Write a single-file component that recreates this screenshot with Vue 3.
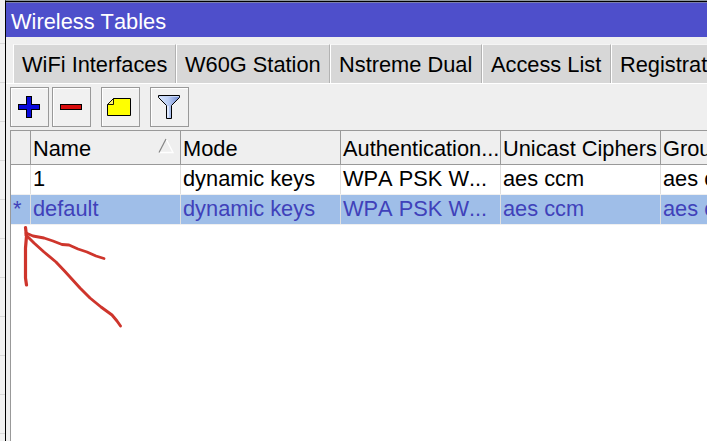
<template>
    <div class="desktop">
        <div class="backdrop"></div>
        <div class="window">
            <div class="title-bar">Wireless Tables</div>
            <div class="tabs">
                <div v-for="tab in tabs" :key="tab.label" :class="['tab', tab.size]">{{ tab.label }}</div>
            </div>
            <div class="toolbar">
                <button class="tool" title="Add">
                    <svg width="37" height="38" viewBox="0 0 37 38" shape-rendering="crispEdges">
                        <path d="M15.5 8.500h5v8h8v5h-8v8h-5v-8h-8v-5h8z" fill="#0909dc" stroke="#000" />
                    </svg>
                </button>
                <button class="tool" title="Remove">
                    <svg width="37" height="38" viewBox="0 0 37 38" shape-rendering="crispEdges">
                        <path d="M7.500 16.500h21v5h-21z" fill="#d80d0d" stroke="#000" />
                    </svg>
                </button>
                <button class="tool comment" title="Comment">
                    <svg width="37" height="38" viewBox="0 0 37 38">
                        <path d="M11.500 10.500H28.500V27.500H5.500V16.500z" fill="#ffff00" stroke="#000" />
                        <path d="M5.500 16.500L11.500 10.500V16.500z" fill="#fff36b" stroke="#000" stroke-width=".9" />
                    </svg>
                </button>
                <button class="tool filter" title="Filter">
                    <svg width="37" height="38" viewBox="0 0 37 38">
                        <defs>
                            <linearGradient id="steel" x1="0" x2="1">
                                <stop offset="0" stop-color="#dce8fb" />
                                <stop offset=".45" stop-color="#bdd0f6" />
                                <stop offset="1" stop-color="#7189cf" />
                            </linearGradient>
                        </defs>
                        <path d="M7.500 7.500H28.500V9.500L20.500 17.500V30.500H15.500V17.500L7.500 9.500z" fill="url(#steel)" stroke="#000" />
                        <path d="M8 8.500H28" stroke="#c5d5f5" />
                        <path d="M17 18V29.500" stroke="#dfe9fb" stroke-width="2" />
                    </svg>
                </button>
            </div>
            <div class="grid">
                <div class="row header">
                    <div class="cell flag"></div>
                    <div v-for="col in columns" :key="col.key" :class="['cell', col.key]">
                        <span>{{ col.label }}</span>
                        <svg v-if="col.key === 'name'" class="sort" width="17" height="16" viewBox="0 0 17 16">
                            <path d="M8 1L15 14.500H1" fill="none" stroke="#fff" stroke-width="1.400" />
                            <path d="M1 14.500L8 1" stroke="#858585" stroke-width="1.200" />
                        </svg>
                    </div>
                </div>
                <div v-for="profile in profiles" :key="profile.name" :class="['row', { selected: profile.isDefault }]">
                    <div class="cell flag">{{ profile.isDefault ? '*' : '' }}</div>
                    <div v-for="col in columns" :key="col.key" :class="['cell', col.key]">{{ profile[col.key] }}</div>
                </div>
            </div>
        </div>
        <!-- hand-drawn arrow pointing at the default flag -->
        <svg class="arrow" width="707" height="441" viewBox="0 0 707 441">
            <path d="M25.500 227.500L26.500 236L25.500 248V278L26.500 285" stroke-width="3.200" />
            <path d="M26 233L33 236L44 238L53 241L62 244.500L69 245L78 249L87 252L96 256L104 258.500" stroke-width="2.800" />
            <path d="M26 235L34 243L44 252L56 262L65 271.500L80 288L90 298L101 307L112 315L117 321L120.500 326" stroke-width="2.900" />
        </svg>
    </div>
</template>

<script setup>
const tabs = [
    { label: 'WiFi Interfaces', size: 'wifi' },
    { label: 'W60G Station', size: 'station' },
    { label: 'Nstreme Dual', size: 'nstreme' },
    { label: 'Access List', size: 'access' },
    { label: 'Registration', size: 'registration' }
];

const columns = [
    { key: 'name', label: 'Name' },
    { key: 'mode', label: 'Mode' },
    { key: 'auth', label: 'Authentication...' },
    { key: 'unicast', label: 'Unicast Ciphers' },
    { key: 'group', label: 'Group Ciphers' }
];

const profiles = [
    { name: '1', mode: 'dynamic keys', auth: 'WPA PSK W...', unicast: 'aes ccm', group: 'aes ccm', isDefault: false },
    { name: 'default', mode: 'dynamic keys', auth: 'WPA PSK W...', unicast: 'aes ccm', group: 'aes ccm', isDefault: true }
];
</script>

<style>
body {
    margin: 0;
    overflow: hidden;
}
</style>

<style scoped>
.desktop {
    position: relative;
    display: flex;
    width: 707px;
    height: 441px;
    overflow: hidden;
    background: #efefef;
    font-family: "Liberation Sans", Arial, sans-serif;
    font-size: 21.8px;
    font-kerning: none;
    color: #000;
}

.backdrop {
    width: 5px;
    background: repeating-linear-gradient(#f1f1f1 0 38px, #d9d9d9 38px 39px);
    background-position: 0 5px;
}

.window {
    box-sizing: border-box;
    flex: none;
    display: flex;
    flex-direction: column;
    width: 702px;
    height: 441px;
    border-left: 1px solid #000;
    border-top: 1px solid #8f999f;
    background: #efefef;
    overflow: hidden;
}

.title-bar {
    box-sizing: border-box;
    flex: none;
    height: 36px;
    border-top: 1px solid #000;
    padding-left: 5px;
    background: #4e4fcb;
    box-shadow: inset 0 1px #7b80ad;
    color: #fff;
    line-height: 39px;
}

.tabs {
    box-sizing: border-box;
    flex: none;
    display: flex;
    height: 47px;
    padding: 7px 0 0 7px;
    border-bottom: 1px solid #fff;
}

.tab {
    box-sizing: border-box;
    flex: none;
    border-left: 1px solid #fff;
    border-right: 1px solid #b2b2b2;
    border-top: 1px solid #f5f5f5;
    padding-left: 8px;
    background: #d7d7d7;
    line-height: 39px;
    white-space: nowrap;
}

.tab.wifi { width: 163px; }
.tab.station { width: 154px; }
.tab.nstreme { width: 152px; }
.tab.access { width: 129px; }
.tab.registration { width: 150px; }

.toolbar {
    flex: none;
    display: flex;
    gap: 3px;
    height: 43px;
    padding: 3px 0 0 4px;
}

.tool {
    box-sizing: border-box;
    flex: none;
    width: 39px;
    height: 40px;
    padding: 0;
    border: 1px solid #999;
    background: #f1f1f1;
    box-shadow: inset 1px 1px #fff;
}

.tool svg {
    display: block;
}

.tool.comment { margin-left: 7px; }
.tool.filter { margin-left: 7px; }

.grid {
    flex: 1;
    margin-left: 4px;
    border-left: 1px solid #999;
    border-top: 1px solid #999;
    background: #fff;
}

.row {
    box-sizing: border-box;
    display: flex;
    width: 800px;
    height: 30px;
    border-bottom: 1px solid #f0f0f0;
    line-height: 28px;
}

.row.header {
    height: 34px;
    border-bottom: 1px solid #999;
    background: #efefef;
    line-height: 35px;
}

.row.selected {
    background: #9fbee8;
    color: #4041ba;
}

.cell {
    box-sizing: border-box;
    flex: none;
    display: flex;
    justify-content: space-between;
    padding-left: 2px;
    border-right: 1px solid #dfdfdf;
    white-space: nowrap;
    overflow: hidden;
}

.header .cell {
    border-color: #999;
}

.cell.flag {
    width: 20px;
    padding-left: 2px;
}

.cell.name { width: 150px; }
.cell.mode { width: 160px; }
.cell.auth { width: 160px; }
.cell.unicast { width: 160px; }
.cell.group { width: 150px; }

.sort {
    margin: 7px 5px 0 0;
}

.arrow {
    position: absolute;
    left: 0;
    top: 0;
    fill: none;
    stroke: #ce352c;
    stroke-linecap: round;
    stroke-linejoin: round;
    pointer-events: none;
}
</style>
